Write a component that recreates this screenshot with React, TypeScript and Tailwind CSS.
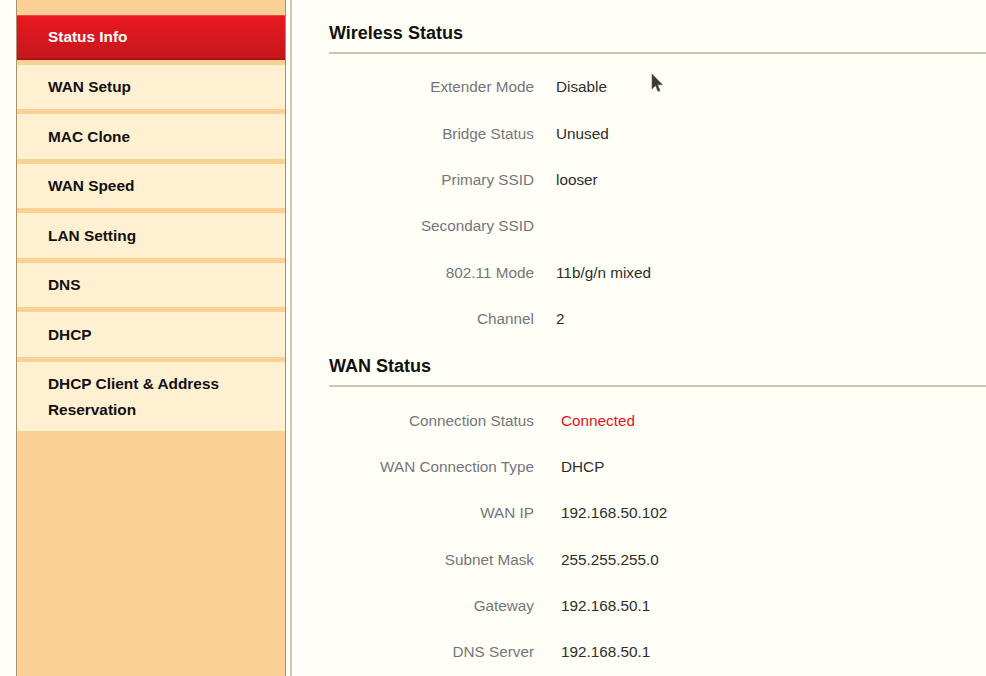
import React from "react";

const menu = [
  "Status Info",
  "WAN Setup",
  "MAC Clone",
  "WAN Speed",
  "LAN Setting",
  "DNS",
  "DHCP",
];

const wireless: [string, string][] = [
  ["Extender Mode", "Disable"],
  ["Bridge Status", "Unused"],
  ["Primary SSID", "looser"],
  ["Secondary SSID", ""],
  ["802.11 Mode", "11b/g/n mixed"],
  ["Channel", "2"],
];

const wan: [string, string][] = [
  ["Connection Status", "Connected"],
  ["WAN Connection Type", "DHCP"],
  ["WAN IP", "192.168.50.102"],
  ["Subnet Mask", "255.255.255.0"],
  ["Gateway", "192.168.50.1"],
  ["DNS Server", "192.168.50.1"],
];

function Row({ label, value, valueGap, red }: { label: string; value: string; valueGap: string; red?: boolean }) {
  return (
    <div className="flex h-[46.4px] items-center text-[15.3px] leading-[20px]">
      <div className={`w-[205px] shrink-0 text-right text-[#74767c] ${valueGap}`}>{label}</div>
      <div className={red ? "text-[#e3141c]" : "text-[#2e2e2e]"}>{value}</div>
    </div>
  );
}

export default function App() {
  return (
    <div className="relative flex h-[676px] w-[986px] overflow-hidden bg-[#fffef7] font-['Liberation_Sans',Arial,sans-serif]">
      {/* sidebar */}
      <div className="ml-[16px] flex w-[270px] shrink-0 flex-col gap-[5px] border-x border-[#a8916b] bg-[#fbd094] pt-[15px]">
        {menu.map((m, i) =>
          i === 0 ? (
            <div
              key={m}
              className="flex h-[44.5px] items-center border-t border-b-2 border-t-[#f0454b] border-b-[#a9131a] bg-gradient-to-b from-[#ea1820] to-[#c5171d] pl-[31px] text-[15.4px] font-bold text-white"
            >
              {m}
            </div>
          ) : (
            <div
              key={m}
              className="flex h-[44.5px] items-center bg-[#fff0d2] pl-[31px] text-[15.4px] font-bold text-[#111]"
            >
              {m}
            </div>
          )
        )}
        <div className="bg-[#fff0d2] pb-[8px] pl-[31px] pt-[9px] text-[15.4px] font-bold leading-[26px] text-[#111]">
          DHCP Client &amp; Address
          <br />
          Reservation
        </div>
      </div>

      {/* divider */}
      <div className="ml-[4px] w-[2px] shrink-0 bg-[#cdc9b8]" />

      {/* content */}
      <div className="flex-1 pl-[37px]">
        <div className="border-b-2 border-[#c9c6b4] pb-[9px] pt-[23px] text-[18px] font-bold leading-[20px] text-[#111]">
          Wireless Status
        </div>
        <div className="mt-[10px]">
          {wireless.map(([l, v]) => (
            <Row key={l} label={l} value={v} valueGap="mr-[22px]" />
          ))}
        </div>
        <div className="border-b-2 border-[#c9c6b4] pb-[9px] pt-[14px] text-[18px] font-bold leading-[20px] text-[#111]">
          WAN Status
        </div>
        <div className="mt-[10px]">
          {wan.map(([l, v], i) => (
            <Row key={l} label={l} value={v} valueGap="mr-[27px]" red={i === 0} />
          ))}
        </div>
      </div>

      {/* mouse cursor */}
      <svg className="absolute left-[651px] top-[73px]" width="13" height="20" viewBox="0 0 13 20">
        <path d="M1 1 L1 16 L4.5 12.5 L7 18.5 L9 17.6 L6.6 11.8 L11.5 11.8 Z" fill="#3a3a3a" stroke="#5a5a5a" strokeWidth="0.6" />
      </svg>
    </div>
  );
}
